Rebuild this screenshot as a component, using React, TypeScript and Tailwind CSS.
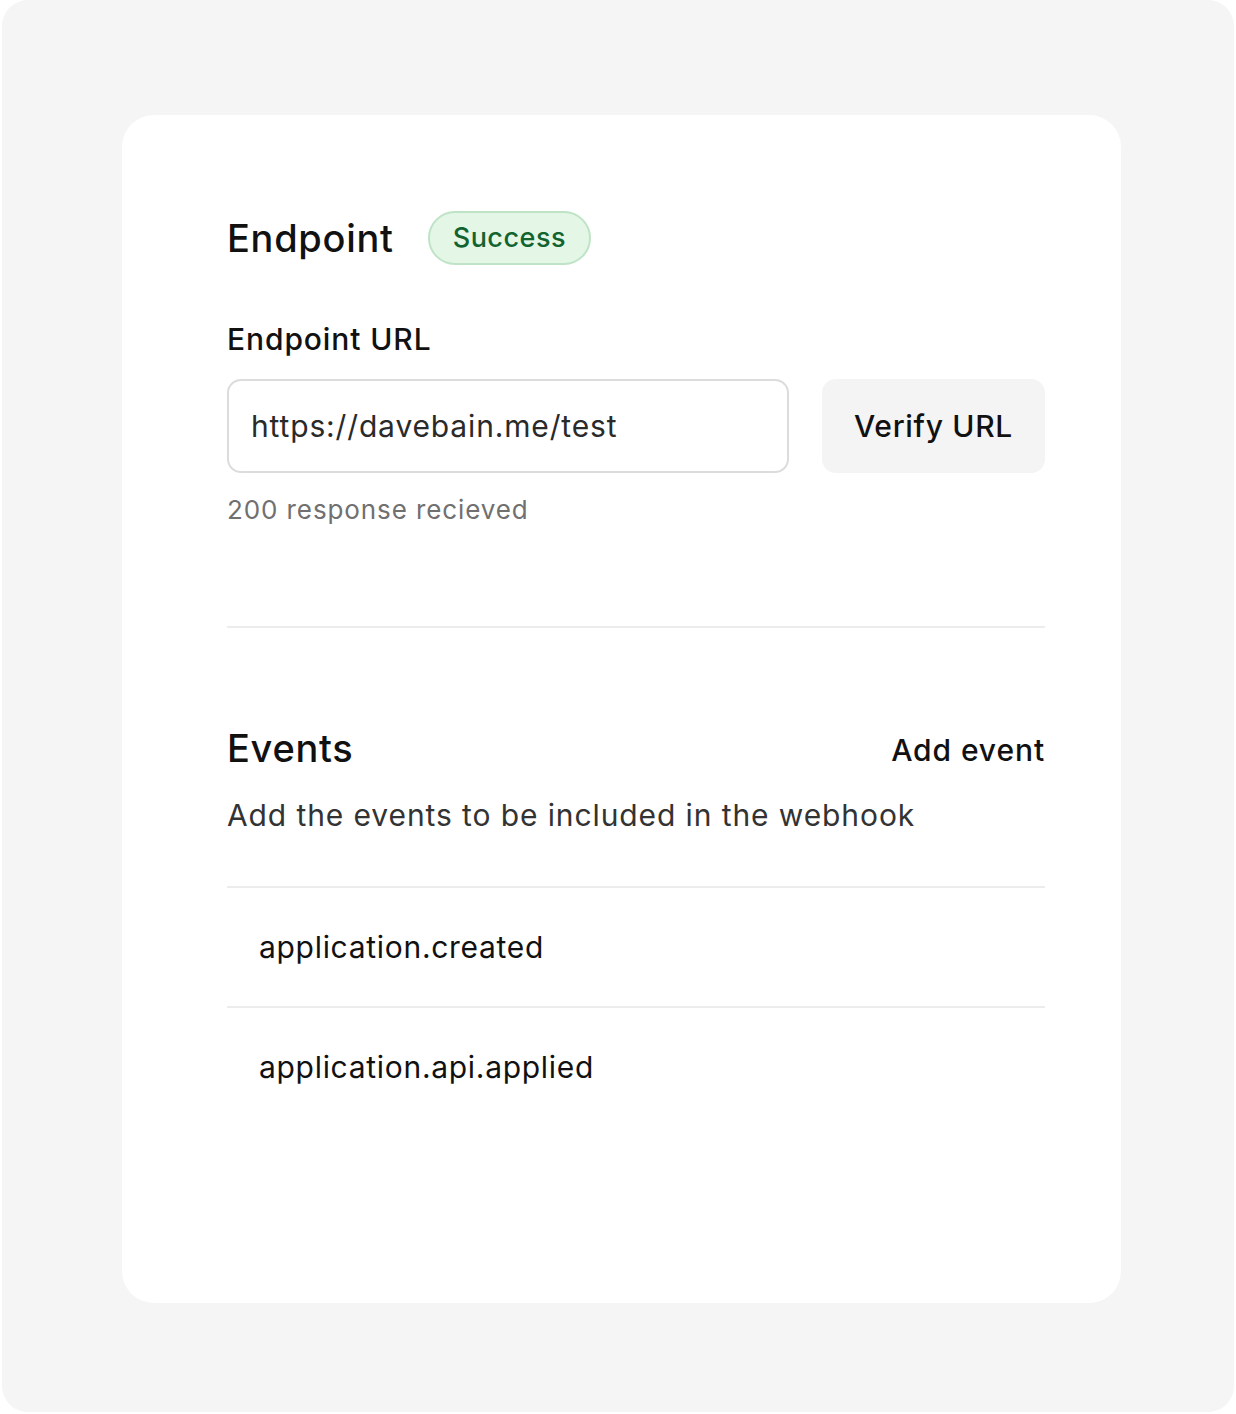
const events = ["application.created", "application.api.applied"];

export default function App() {
  return (
    <div className="w-full bg-white px-[2px] pb-[2px] font-['Inter',sans-serif]">
      <div className="h-[1412px] rounded-[26px] bg-[#f5f5f5] pt-[115px] pl-[120px]">
        <div className="flex h-[1188px] w-[999px] flex-col rounded-[32px] bg-white pt-[96px] pl-[105px] pr-[76px]">
          {/* Endpoint header */}
          <div className="flex items-center gap-[34px]">
            <h2 className="text-[38px] leading-[44px] font-medium tracking-[0.7px] text-[#111]">Endpoint</h2>
            <span className="flex h-[54px] items-center rounded-full border-2 border-[#bfe3c6] bg-[#e4f7e6] px-[23px] text-[27px] font-medium tracking-[0.5px] text-[#12632f]">
              Success
            </span>
          </div>

          <label className="mt-[56px] text-[30px] leading-[36px] font-medium tracking-[0.9px] text-[#111]">Endpoint URL</label>

          <div className="mt-[22px] flex gap-[33px]">
            <div className="flex h-[94px] w-[562px] items-center rounded-[14px] border-2 border-[#dcdcdc] px-[22px] text-[30px] tracking-[0.85px] text-[#2a2a2a]">
              https://davebain.me/test
            </div>
            <button className="flex h-[94px] flex-1 items-center justify-center rounded-[14px] bg-[#f4f4f4] text-[30px] font-medium tracking-[0.7px] text-[#111]">
              Verify URL
            </button>
          </div>

          <p className="mt-[20px] text-[26px] leading-[34px] tracking-[0.9px] text-[#707070]">200 response recieved</p>

          <div className="mt-[99px] h-[2px] bg-[#ececec]" />

          {/* Events */}
          <div className="mt-[98px] flex items-end justify-between">
            <h2 className="text-[38px] leading-[44px] font-medium tracking-[0.7px] text-[#111]">Events</h2>
            <button className="text-[30px] leading-[40px] font-medium tracking-[0.9px] text-[#111]">Add event</button>
          </div>
          <p className="mt-[27px] text-[30px] leading-[36px] tracking-[0.9px] text-[#333]">Add the events to be included in the webhook</p>

          <div className="mt-[53px] flex flex-col">
            {events.map((e) => (
              <div key={e} className="flex h-[120px] items-center border-t-2 border-[#ececec] pl-[32px] text-[30px] tracking-[0.7px] text-[#111]">
                {e}
              </div>
            ))}
          </div>
        </div>
      </div>
    </div>
  );
}
